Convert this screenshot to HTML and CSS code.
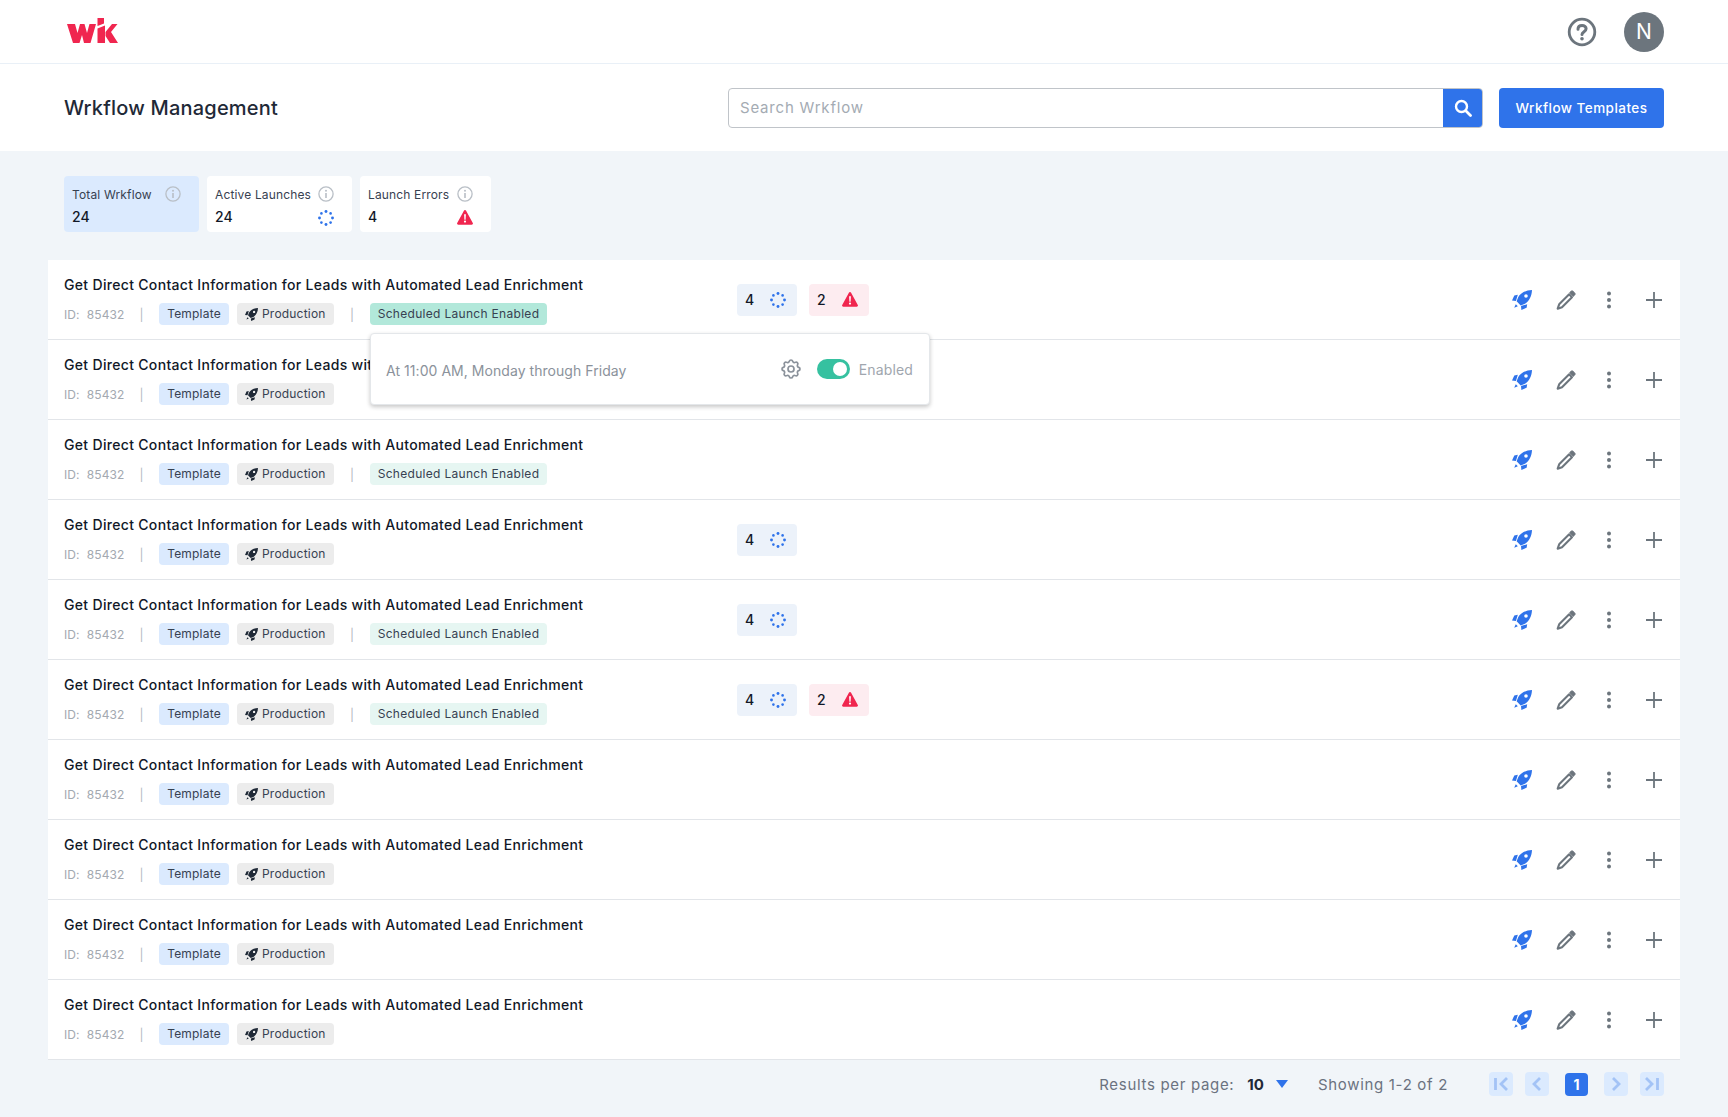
FILE: index.html
```html
<!DOCTYPE html>
<html lang="en">
<head>
<meta charset="utf-8">
<title>Wrkflow Management</title>
<link rel="stylesheet" href="styles.css">
</head>
<body>
<svg class="defs" aria-hidden="true">
  <symbol id="rocket" viewBox="0 0 20 20"><g fill="currentColor"><path fill-rule="evenodd" d="M20 0C13.500.3 8.800 3 6.300 7L4.600 11.300l4.100 4.100L13 13.700C17 11.200 19.800 6.500 20 0zM14 4.200a1.800 1.800 0 1 1 0 3.600 1.800 1.800 0 0 1 0-3.600z"/><path d="M5.800 4.800 2.300 5.400 0 10.600l3.900.4z"/><path d="M15.200 14.200l-.6 3.500L9.400 20 9 16.100z"/><path d="M3.800 14.200l2 2-3.600 1.600z"/></g></symbol>
  <symbol id="pencil" viewBox="0 0 24 24"><path fill="none" stroke="currentColor" stroke-width="2.500" stroke-linejoin="round" d="M15.800 5.200 3.800 17.200 2 22.400l5.200-1.800 12-12z"/><path fill="currentColor" stroke="currentColor" stroke-width="1" stroke-linejoin="round" d="m16.300 3.200 1.700-1.700a1.800 1.800 0 0 1 2.500 0l2 2a1.800 1.800 0 0 1 0 2.500L20.800 7.700z"/></symbol>
  <symbol id="dots" viewBox="0 0 6 20"><circle cx="3" cy="3.500" r="2" fill="currentColor"/><circle cx="3" cy="10" r="2" fill="currentColor"/><circle cx="3" cy="16.500" r="2" fill="currentColor"/></symbol>
  <symbol id="plus" viewBox="0 0 16 16"><path fill="none" stroke="currentColor" stroke-width="1.800" d="M8 0v16M0 8h16"/></symbol>
  <symbol id="spin" viewBox="0 0 16 16"><g fill="currentColor"><circle cx="8" cy="1.500" r="1.450"/><circle cx="12.600" cy="3.400" r="1.300"/><circle cx="14.500" cy="8" r="1.450"/><circle cx="12.600" cy="12.600" r="1.300"/><circle cx="8" cy="14.500" r="1.450"/><circle cx="3.400" cy="12.600" r="1.300"/><circle cx="1.500" cy="8" r="1.450"/><circle cx="3.400" cy="3.400" r="1.300"/></g></symbol>
  <symbol id="warn" viewBox="0 0 16 15"><path fill="currentColor" d="M8 0c.5 0 .9.300 1.100.700l6.700 12.200c.4.800-.1 1.800-1.100 1.800H1.300C.3 14.700-.2 13.700.2 12.900L6.900.7C7.100.3 7.500 0 8 0z"/><path fill="#fff" d="M7.100 4.300h1.800l-.3 5.400H7.400zM8 10.500a1.100 1.100 0 1 1 0 2.200 1.100 1.100 0 0 1 0-2.200z"/></symbol>
  <symbol id="info" viewBox="0 0 16 16"><circle cx="8" cy="8" r="7.100" fill="none" stroke="currentColor" stroke-width="1.300"/><path fill="currentColor" d="M7.200 7h1.600v5H7.200zM8 3.800a1 1 0 1 1 0 2 1 1 0 0 1 0-2z"/></symbol>
</svg>

<header class="topbar">
  <svg class="logo" viewBox="0 0 52 27" aria-label="wk logo"><path fill="#f0264f" d="M1 6h8l2.500 9L14 6h4.500l2.500 9 2.500-9H30l-5.500 19H18l-2-8-2.500 8H7z"/><path fill="#f0264f" d="M31.500 0H38v5.500L31.500 8zM31.500 10.500 39 7.500V25h-7.500zM39.500 14l6.500-8h5.500l-6.500 8 7 11h-8l-4.500-7z"/></svg>
  <div class="top-actions">
    <svg class="help" viewBox="0 0 30 30"><circle cx="15" cy="15" r="12.800" fill="none" stroke="#6c757d" stroke-width="2.800"/><path fill="none" stroke="#6c757d" stroke-width="3" stroke-linecap="round" d="M11 12.200c0-2.500 1.800-3.800 4.100-3.800s4 1.400 4 3.400c0 3-4.100 2.900-4.100 5.800"/><circle cx="15" cy="21.800" r="1.800" fill="#6c757d"/></svg>
    <div class="avatar">N</div>
  </div>
</header>

<section class="subbar">
  <h1 class="page-title">Wrkflow Management</h1>
  <div class="subbar-tools">
    <div class="search">
      <span class="search-text">Search Wrkflow</span>
      <span class="search-btn"><svg viewBox="0 0 18 18" class="search-ico"><circle cx="7.500" cy="7.500" r="5.500" fill="none" stroke="#fff" stroke-width="2.400"/><path stroke="#fff" stroke-width="2.800" stroke-linecap="round" d="m12 12 4.500 4.500"/></svg></span>
    </div>
    <button class="btn-primary">Wrkflow Templates</button>
  </div>
</section>

<main class="content">
  <div class="stats">
    <div class="stat stat-total">
      <div class="stat-head"><span>Total Wrkflow</span><svg class="ico-info"><use href="#info"/></svg></div>
      <div class="stat-value"><span>24</span></div>
    </div>
    <div class="stat stat-active">
      <div class="stat-head"><span>Active Launches</span><svg class="ico-info"><use href="#info"/></svg></div>
      <div class="stat-value"><span>24</span><svg class="ico-spin"><use href="#spin"/></svg></div>
    </div>
    <div class="stat stat-errors">
      <div class="stat-head"><span>Launch Errors</span><svg class="ico-info"><use href="#info"/></svg></div>
      <div class="stat-value"><span>4</span><svg class="ico-warn"><use href="#warn"/></svg></div>
    </div>
  </div>

  <div class="list">
    <article class="row">
      <div class="row-main">
        <div class="row-title">Get Direct Contact Information for Leads with Automated Lead Enrichment</div>
        <div class="row-meta"><span class="id">ID:&nbsp; 85432</span><span class="sep">|</span><span class="tag tag-template">Template</span><span class="tag tag-prod"><svg class="ico-tagrocket"><use href="#rocket"/></svg>Production</span><span class="sep sep-b">|</span>
          <span class="sched-wrap"><span class="tag tag-sched-on">Scheduled Launch Enabled</span>
            <div class="popover">
              <span class="pop-text">At 11:00 AM, Monday through Friday</span>
              <svg class="ico-gear" viewBox="0 0 24 24"><path fill="none" stroke="currentColor" stroke-width="1.700" d="M10.325 4.317c.426-1.756 2.924-1.756 3.350 0a1.724 1.724 0 0 0 2.573 1.066c1.543-.94 3.310.826 2.370 2.370a1.724 1.724 0 0 0 1.065 2.572c1.756.426 1.756 2.924 0 3.350a1.724 1.724 0 0 0-1.066 2.573c.94 1.543-.826 3.310-2.370 2.370a1.724 1.724 0 0 0-2.572 1.065c-.426 1.756-2.924 1.756-3.350 0a1.724 1.724 0 0 0-2.573-1.066c-1.543.94-3.310-.826-2.370-2.370a1.724 1.724 0 0 0-1.065-2.572c-1.756-.426-1.756-2.924 0-3.350a1.724 1.724 0 0 0 1.066-2.573c-.94-1.543.826-3.310 2.370-2.370.996.608 2.296.07 2.572-1.065z"/><circle cx="12" cy="12" r="3" fill="none" stroke="currentColor" stroke-width="1.700"/></svg>
              <span class="toggle"><span class="knob"></span></span>
              <span class="pop-state">Enabled</span>
            </div>
          </span></div>
      </div>
      <div class="counters"><span class="count count-run">4<svg class="ico-spin"><use href="#spin"/></svg></span><span class="count count-err">2<svg class="ico-warn"><use href="#warn"/></svg></span></div>
      <div class="actions"><svg class="a-rocket"><use href="#rocket"/></svg><svg class="a-pencil"><use href="#pencil"/></svg><svg class="a-dots"><use href="#dots"/></svg><svg class="a-plus"><use href="#plus"/></svg></div>
    </article>

    <article class="row">
      <div class="row-main">
        <div class="row-title">Get Direct Contact Information for Leads with Automated Lead Enrichment</div>
        <div class="row-meta"><span class="id">ID:&nbsp; 85432</span><span class="sep">|</span><span class="tag tag-template">Template</span><span class="tag tag-prod"><svg class="ico-tagrocket"><use href="#rocket"/></svg>Production</span></div>
      </div>
      <div class="counters"></div>
      <div class="actions"><svg class="a-rocket"><use href="#rocket"/></svg><svg class="a-pencil"><use href="#pencil"/></svg><svg class="a-dots"><use href="#dots"/></svg><svg class="a-plus"><use href="#plus"/></svg></div>
    </article>

    <article class="row">
      <div class="row-main">
        <div class="row-title">Get Direct Contact Information for Leads with Automated Lead Enrichment</div>
        <div class="row-meta"><span class="id">ID:&nbsp; 85432</span><span class="sep">|</span><span class="tag tag-template">Template</span><span class="tag tag-prod"><svg class="ico-tagrocket"><use href="#rocket"/></svg>Production</span><span class="sep sep-b">|</span><span class="tag tag-sched">Scheduled Launch Enabled</span></div>
      </div>
      <div class="counters"></div>
      <div class="actions"><svg class="a-rocket"><use href="#rocket"/></svg><svg class="a-pencil"><use href="#pencil"/></svg><svg class="a-dots"><use href="#dots"/></svg><svg class="a-plus"><use href="#plus"/></svg></div>
    </article>

    <article class="row">
      <div class="row-main">
        <div class="row-title">Get Direct Contact Information for Leads with Automated Lead Enrichment</div>
        <div class="row-meta"><span class="id">ID:&nbsp; 85432</span><span class="sep">|</span><span class="tag tag-template">Template</span><span class="tag tag-prod"><svg class="ico-tagrocket"><use href="#rocket"/></svg>Production</span></div>
      </div>
      <div class="counters"><span class="count count-run">4<svg class="ico-spin"><use href="#spin"/></svg></span></div>
      <div class="actions"><svg class="a-rocket"><use href="#rocket"/></svg><svg class="a-pencil"><use href="#pencil"/></svg><svg class="a-dots"><use href="#dots"/></svg><svg class="a-plus"><use href="#plus"/></svg></div>
    </article>

    <article class="row">
      <div class="row-main">
        <div class="row-title">Get Direct Contact Information for Leads with Automated Lead Enrichment</div>
        <div class="row-meta"><span class="id">ID:&nbsp; 85432</span><span class="sep">|</span><span class="tag tag-template">Template</span><span class="tag tag-prod"><svg class="ico-tagrocket"><use href="#rocket"/></svg>Production</span><span class="sep sep-b">|</span><span class="tag tag-sched">Scheduled Launch Enabled</span></div>
      </div>
      <div class="counters"><span class="count count-run">4<svg class="ico-spin"><use href="#spin"/></svg></span></div>
      <div class="actions"><svg class="a-rocket"><use href="#rocket"/></svg><svg class="a-pencil"><use href="#pencil"/></svg><svg class="a-dots"><use href="#dots"/></svg><svg class="a-plus"><use href="#plus"/></svg></div>
    </article>

    <article class="row">
      <div class="row-main">
        <div class="row-title">Get Direct Contact Information for Leads with Automated Lead Enrichment</div>
        <div class="row-meta"><span class="id">ID:&nbsp; 85432</span><span class="sep">|</span><span class="tag tag-template">Template</span><span class="tag tag-prod"><svg class="ico-tagrocket"><use href="#rocket"/></svg>Production</span><span class="sep sep-b">|</span><span class="tag tag-sched">Scheduled Launch Enabled</span></div>
      </div>
      <div class="counters"><span class="count count-run">4<svg class="ico-spin"><use href="#spin"/></svg></span><span class="count count-err">2<svg class="ico-warn"><use href="#warn"/></svg></span></div>
      <div class="actions"><svg class="a-rocket"><use href="#rocket"/></svg><svg class="a-pencil"><use href="#pencil"/></svg><svg class="a-dots"><use href="#dots"/></svg><svg class="a-plus"><use href="#plus"/></svg></div>
    </article>

    <article class="row">
      <div class="row-main">
        <div class="row-title">Get Direct Contact Information for Leads with Automated Lead Enrichment</div>
        <div class="row-meta"><span class="id">ID:&nbsp; 85432</span><span class="sep">|</span><span class="tag tag-template">Template</span><span class="tag tag-prod"><svg class="ico-tagrocket"><use href="#rocket"/></svg>Production</span></div>
      </div>
      <div class="counters"></div>
      <div class="actions"><svg class="a-rocket"><use href="#rocket"/></svg><svg class="a-pencil"><use href="#pencil"/></svg><svg class="a-dots"><use href="#dots"/></svg><svg class="a-plus"><use href="#plus"/></svg></div>
    </article>

    <article class="row">
      <div class="row-main">
        <div class="row-title">Get Direct Contact Information for Leads with Automated Lead Enrichment</div>
        <div class="row-meta"><span class="id">ID:&nbsp; 85432</span><span class="sep">|</span><span class="tag tag-template">Template</span><span class="tag tag-prod"><svg class="ico-tagrocket"><use href="#rocket"/></svg>Production</span></div>
      </div>
      <div class="counters"></div>
      <div class="actions"><svg class="a-rocket"><use href="#rocket"/></svg><svg class="a-pencil"><use href="#pencil"/></svg><svg class="a-dots"><use href="#dots"/></svg><svg class="a-plus"><use href="#plus"/></svg></div>
    </article>

    <article class="row">
      <div class="row-main">
        <div class="row-title">Get Direct Contact Information for Leads with Automated Lead Enrichment</div>
        <div class="row-meta"><span class="id">ID:&nbsp; 85432</span><span class="sep">|</span><span class="tag tag-template">Template</span><span class="tag tag-prod"><svg class="ico-tagrocket"><use href="#rocket"/></svg>Production</span></div>
      </div>
      <div class="counters"></div>
      <div class="actions"><svg class="a-rocket"><use href="#rocket"/></svg><svg class="a-pencil"><use href="#pencil"/></svg><svg class="a-dots"><use href="#dots"/></svg><svg class="a-plus"><use href="#plus"/></svg></div>
    </article>

    <article class="row">
      <div class="row-main">
        <div class="row-title">Get Direct Contact Information for Leads with Automated Lead Enrichment</div>
        <div class="row-meta"><span class="id">ID:&nbsp; 85432</span><span class="sep">|</span><span class="tag tag-template">Template</span><span class="tag tag-prod"><svg class="ico-tagrocket"><use href="#rocket"/></svg>Production</span></div>
      </div>
      <div class="counters"></div>
      <div class="actions"><svg class="a-rocket"><use href="#rocket"/></svg><svg class="a-pencil"><use href="#pencil"/></svg><svg class="a-dots"><use href="#dots"/></svg><svg class="a-plus"><use href="#plus"/></svg></div>
    </article>
  </div>

  <nav class="pager">
    <span class="pager-label">Results per page:</span>
    <span class="pager-size">10</span>
    <span class="pager-caret"></span>
    <span class="pager-showing">Showing 1-2 of 2</span>
    <div class="pager-btns">
      <span class="pg"><svg viewBox="0 0 24 24"><path d="M6.500 6v12M18 6l-6 6 6 6"/></svg></span>
      <span class="pg"><svg viewBox="0 0 24 24"><path d="m15 6-6 6 6 6"/></svg></span>
      <span class="pg pg-current">1</span>
      <span class="pg"><svg viewBox="0 0 24 24"><path d="m9 6 6 6-6 6"/></svg></span>
      <span class="pg"><svg viewBox="0 0 24 24"><path d="M17.500 6v12M6 6l6 6-6 6"/></svg></span>
    </div>
  </nav>
</main>
</body>
</html>
```

FILE: styles.css
```css
* { box-sizing: border-box; }
html, body { margin: 0; padding: 0; }
body {
  background: #f1f5f9;
  color: #1f2937;
  font-family: Inter, "Open Sans", "Liberation Sans", sans-serif;
  min-height: 1117px;
}
.defs { display: none; }

.topbar {
  height: 64px;
  background: #fff;
  border-bottom: 1px solid #e9f0f7;
  display: flex;
  align-items: center;
  justify-content: space-between;
  padding: 0 64px 0 66px;
}
.logo { width: 52px; height: 27px; display: block; margin-top: -1px; }
.top-actions { display: flex; align-items: center; gap: 27px; }
.help { width: 30px; height: 30px; display: block; }
.avatar {
  width: 40px; height: 40px; border-radius: 50%;
  background: #6c757d; color: #fff;
  font-size: 21px; line-height: 40px; text-align: center;
}

.subbar {
  height: 87px;
  background: #fff;
  display: flex;
  align-items: center;
  justify-content: space-between;
  padding: 0 64px;
}
.page-title { margin: 0; font-size: 20px; line-height: 24px; padding-top: 1px; font-weight: 500; color: #1f2937; letter-spacing: 0.2px; }
.subbar-tools { display: flex; align-items: center; gap: 16px; }
.search {
  width: 755px; height: 40px;
  border: 1px solid #c0c4c9; border-radius: 4px;
  background: #fff;
  display: flex; align-items: stretch; justify-content: space-between;
  overflow: hidden;
}
.search-text { font-size: 15px; line-height: 38px; color: #a4abb3; padding-left: 11px; letter-spacing: 0.8px; }
.search-btn { width: 39px; background: #2f73ea; display: flex; align-items: center; justify-content: center; }
.search-ico { width: 18px; height: 18px; }
.btn-primary {
  width: 165px; height: 40px;
  border: 0; border-radius: 4px;
  background: #2f73ea; color: #fff;
  font: 500 13.500px Inter, "Open Sans", sans-serif;
  letter-spacing: 0.46px;
}

.content { padding-top: 25px; }
.stats { display: flex; gap: 8px; padding-left: 64px; height: 56px; }
.stat { background: #fff; border-radius: 4px; padding: 8px 8px 0; height: 56px; }
.stat-total { width: 135px; background: #dbeafe; }
.stat-active { width: 145px; }
.stat-errors { width: 131px; }
.stat-head {
  display: flex; align-items: center; justify-content: space-between;
  height: 20px;
  font-size: 12px; color: #374151; letter-spacing: 0.15px;
  padding-right: 10px;
}
.ico-info { width: 16px; height: 16px; color: #b9bfc6; flex: none; }
.stat-value {
  display: flex; align-items: center; justify-content: space-between;
  margin-top: 2px; height: 20px;
  font-size: 14px; font-weight: 500; color: #111827;
  padding-right: 10px;
}
.stat-value svg { margin-top: 3px; }
.ico-spin { width: 16px; height: 16px; color: #2f73ea; flex: none; }
.ico-warn { width: 16px; height: 15px; color: #f0264f; flex: none; }

.list { margin: 28px 48px 0; }
.row {
  height: 80px;
  background: #fff;
  border-bottom: 1px solid #e2e5e9;
  display: flex;
  align-items: stretch;
  padding: 0 16px;
}
.row-main { width: 673px; flex: none; padding-top: 15px; }
.row-title { font-size: 14px; line-height: 20px; font-weight: 500; color: #111827; letter-spacing: 0.32px; white-space: nowrap; }
.row-meta { display: flex; align-items: center; height: 22px; margin-top: 8px; font-size: 12px; }
.id { width: 60px; color: #a3a9b1; letter-spacing: 0.12px; white-space: nowrap; }
.sep { width: 35px; text-align: center; color: #b4b9bf; flex: none; }
.sep-b { width: 36px; }
.tag {
  height: 22px; line-height: 22px; border-radius: 4px;
  padding: 0 8px; white-space: nowrap; color: #374151;
  letter-spacing: 0.2px;
  display: inline-flex; align-items: center;
  flex: none;
}
.tag-template { width: 70px; background: #dbeafe; margin-right: 8px; justify-content: center; padding: 0; }
.tag-prod { width: 97px; background: #ececec; padding: 0 0 0 8px; }
.ico-tagrocket { width: 13px; height: 13px; color: #1f2937; margin-right: 4px; flex: none; }
.tag-sched { width: 177px; background: #e6f6f2; justify-content: center; padding: 0; letter-spacing: 0.3px; }
.tag-sched-on { width: 177px; background: #b2e8da; justify-content: center; padding: 0; letter-spacing: 0.3px; }
.sched-wrap { position: relative; display: inline-flex; }
.popover {
  position: absolute; left: 0; top: 30px; z-index: 5;
  width: 560px; height: 72px;
  background: #fff;
  border: 1px solid #e4e7ea; border-radius: 4px;
  box-shadow: 0 2px 4px rgba(0, 0, 0, 0.22);
  display: flex; align-items: center;
  padding: 0 16px 0 15px;
}
.pop-text { font-size: 14px; color: #8b929b; letter-spacing: 0.05px; flex: 1; padding-top: 2px; }
.ico-gear { width: 24px; height: 24px; color: #8b929b; flex: none; margin-right: 14px; }
.toggle { width: 33px; height: 20px; border-radius: 10px; background: #36c1a0; position: relative; flex: none; margin-right: 9px; }
.knob { position: absolute; right: 3px; top: 3px; width: 14px; height: 14px; border-radius: 50%; background: #fff; }
.pop-state { font-size: 14px; color: #a0a6ae; letter-spacing: 0.15px; }

.counters { width: 200px; flex: none; display: flex; align-items: center; gap: 12px; }
.count {
  width: 60px; height: 32px; border-radius: 4px;
  display: flex; align-items: center; justify-content: space-between;
  padding: 0 11px 0 8px;
  font-size: 14px; font-weight: 500; color: #111827;
}
.count-run { background: #ecf2fa; }
.count-err { background: #fdecf0; }

.actions { margin-left: auto; display: flex; align-items: center; color: #6c757d; margin-right: 2px; }
.a-rocket { width: 20px; height: 20px; color: #2f73ea; margin-right: 24px; }
.a-pencil { width: 20px; height: 20px; color: #6c757d; margin-right: 30px; }
.a-dots { width: 6px; height: 20px; margin-right: 34px; }
.a-plus { width: 16px; height: 16px; }

.pager { display: flex; align-items: center; justify-content: flex-end; padding: 12px 64px 0 0; height: 36px; color: #6b7280; font-size: 15px; letter-spacing: 0.68px; }
.pager-size { margin-left: 13px; font-weight: 700; color: #1f2937; letter-spacing: 0; }
.pager-caret { margin-left: 12px; width: 0; height: 0; border-left: 6px solid transparent; border-right: 6px solid transparent; border-top: 8px solid #2f73ea; }
.pager-showing { margin-left: 30px; }
.pager-btns { display: flex; align-items: center; gap: 12px; margin-left: 41px; }
.pg { width: 24px; height: 24px; border-radius: 4px; background: #dbeafe; display: flex; align-items: center; justify-content: center; }
.pg svg { width: 24px; height: 24px; }
.pg path { fill: none; stroke: #a3c3f6; stroke-width: 2.800; }
.pg-current { width: 23px; height: 23px; margin: 0 4px; background: #2f73ea; color: #fff; font-size: 14px; font-weight: 700; letter-spacing: 0; }
```
